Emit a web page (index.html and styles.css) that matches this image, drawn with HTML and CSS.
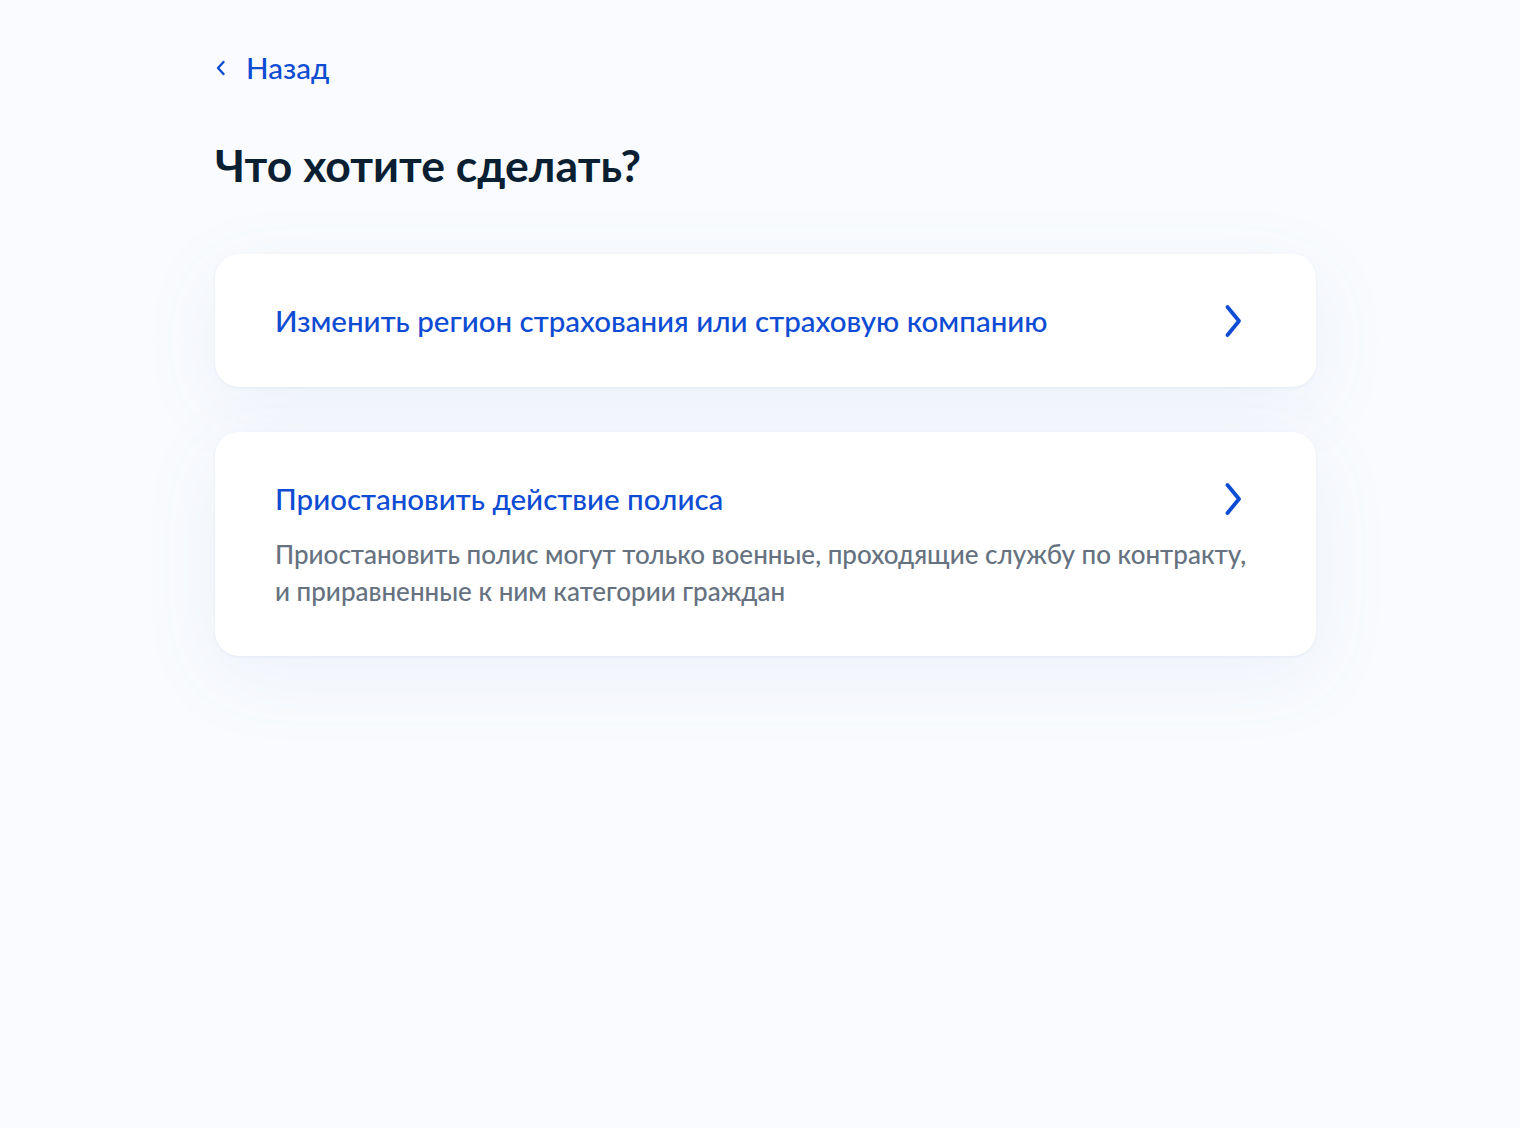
FILE: index.html
```html
<!DOCTYPE html>
<html lang="ru">
  <head>
    <meta charset="UTF-8" />
    <meta name="viewport" content="width=device-width, initial-scale=1.0" />
    <title>Что хотите сделать?</title>
    <link rel="stylesheet" href="styles.css">
  </head>
  <body>
    <main class="page">
      <a class="back-link" href="#">
        <svg class="back-icon" width="12" height="20" viewBox="0 0 12 20">
          <path d="M8.5 4 L3 10 L8.5 16" fill="none" stroke="#0d4cd3" stroke-width="2.4" stroke-linecap="round" stroke-linejoin="round"/>
        </svg>
        <span>Назад</span>
      </a>

      <h1 class="page-title">Что хотите сделать?</h1>

      <div class="options">
        <a class="option-card" href="#">
          <div class="option-head">
            <div class="option-title">Изменить регион страхования или страховую компанию</div>
            <svg class="option-arrow" width="24" height="40" viewBox="0 0 24 40">
              <path d="M5.5 6 L17 20 L5.5 34" fill="none" stroke="#0d4cd3" stroke-width="3.8" stroke-linecap="round" stroke-linejoin="round"/>
            </svg>
          </div>
        </a>

        <a class="option-card" href="#">
          <div class="option-head">
            <div class="option-title">Приостановить действие полиса</div>
            <svg class="option-arrow" width="24" height="40" viewBox="0 0 24 40">
              <path d="M5.5 6 L17 20 L5.5 34" fill="none" stroke="#0d4cd3" stroke-width="3.8" stroke-linecap="round" stroke-linejoin="round"/>
            </svg>
          </div>
          <p class="option-desc">Приостановить полис могут только военные, проходящие службу по контракту, и приравненные к ним категории граждан</p>
        </a>
      </div>
    </main>
  </body>
</html>
```

FILE: styles.css
```css
* {
  box-sizing: border-box;
  margin: 0;
  padding: 0;
}

body {
  font-family: Lato, "Liberation Sans", Arial, sans-serif;
  background-color: #f9fbfe;
  color: #0b1f33;
  min-height: 100vh;
}

.page {
  width: 1101px;
  margin-left: 215px;
  padding-top: 50px;
}

.back-link {
  display: inline-flex;
  align-items: center;
  gap: 19px;
  color: #0d4cd3;
  text-decoration: none;
  font-size: 29.5px;
  font-weight: 500;
  line-height: 36px;
}

.back-icon {
  display: block;
}

.page-title {
  font-size: 44.5px;
  font-weight: 700;
  line-height: 52px;
  color: #0b1f33;
  margin-top: 53px;
}

.options {
  display: flex;
  flex-direction: column;
  gap: 45px;
  margin-top: 63px;
}

.option-card {
  display: flex;
  flex-direction: column;
  background-color: #fff;
  border-radius: 24px;
  padding: 47px 60px 46px 60px;
  text-decoration: none;
  box-shadow: 0 1px 3px rgba(102, 132, 190, 0.1), 0 20px 80px rgba(102, 132, 190, 0.08);
}

.option-head {
  display: flex;
  align-items: center;
  justify-content: space-between;
  gap: 30px;
}

.option-title {
  color: #0d4cd3;
  font-size: 29.5px;
  font-weight: 500;
  line-height: 40px;
}

.option-desc {
  color: #66727f;
  font-size: 26px;
  font-weight: 500;
  line-height: 37px;
  margin-top: 17px;
}

.option-arrow {
  display: block;
  flex-shrink: 0;
  margin-right: 10px;
}
```
